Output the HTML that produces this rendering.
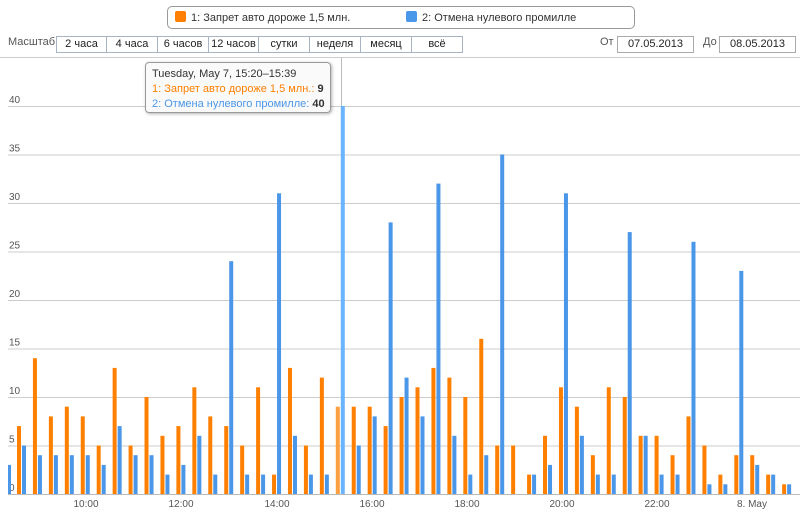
<!DOCTYPE html>
<html><head><meta charset="utf-8"><style>
body{margin:0;width:800px;height:513px;background:#fff;font-family:"Liberation Sans","DejaVu Sans",sans-serif;position:relative;overflow:hidden;color:#333}
.legend{position:absolute;left:167px;top:6px;width:466px;height:21px;border:1px solid #999;border-radius:5px;font-size:11px}
.legend span{position:absolute;top:4px}
.sw{display:inline-block;width:11px;height:11px;border-radius:2px;vertical-align:-1px;margin-right:5px}
.tb{position:absolute;top:36px;font-size:11px}
.btn{position:absolute;top:36px;height:15px;border:1px solid #a9b4c2;background:#fff;font-size:11px;text-align:center;line-height:15px;color:#222}
.inp{position:absolute;top:36px;height:15px;border:1px solid #aaa;font-size:11px;line-height:15px;text-align:center;color:#222}
.tip{position:absolute;left:145px;top:62px;width:186px;height:51px;border:1px solid #999;border-radius:4px;background:rgba(250,250,250,.92);box-shadow:1px 1px 3px rgba(0,0,0,.3);font-size:11px;line-height:15px;padding:4px 0 0 6px;box-sizing:border-box}
</style></head><body>
<div class="legend"><span style="left:7px"><i class="sw" style="background:#ff7f00"></i>1: Запрет авто дороже 1,5 млн.</span><span style="left:238px"><i class="sw" style="background:#4a96e8"></i>2: Отмена нулевого промилле</span></div>
<div class="tb" style="left:8px;color:#555">Масштаб</div>
<div class="btn" style="left:56px;width:49px">2 часа</div>
<div class="btn" style="left:106px;width:50px">4 часа</div>
<div class="btn" style="left:157px;width:50px">6 часов</div>
<div class="btn" style="left:208px;width:49px">12 часов</div>
<div class="btn" style="left:258px;width:50px">сутки</div>
<div class="btn" style="left:309px;width:50px">неделя</div>
<div class="btn" style="left:360px;width:50px">месяц</div>
<div class="btn" style="left:411px;width:50px">всё</div>
<div class="tb" style="left:600px;color:#555">От</div>
<div class="inp" style="left:617px;width:75px">07.05.2013</div>
<div class="tb" style="left:703px;color:#555">До</div>
<div class="inp" style="left:719px;width:75px">08.05.2013</div>
<svg id="c" width="800" height="513" style="position:absolute;left:0;top:0" font-family="Liberation Sans, DejaVu Sans, sans-serif" font-size="10" fill="#555"></svg>
<div class="tip">Tuesday, May 7, 15:20–15:39<br><span style="color:#ff7f00">1: Запрет авто дороже 1,5 млн.:</span> <b>9</b><br><span style="color:#4a96e8">2: Отмена нулевого промилле:</span> <b>40</b></div>
<script>
var o=[7,14,8,9,8,5,13,5,10,6,7,11,8,7,5,11,2,13,5,12,9,9,9,7,10,11,13,12,10,16,5,5,2,6,11,9,4,11,10,6,6,4,8,5,2,4,4,2,1];
var b=[5,4,4,4,4,3,7,4,4,2,3,6,2,24,2,2,31,6,2,2,40,5,8,28,12,8,32,6,2,4,35,0,2,3,31,6,2,2,27,6,2,2,26,1,1,23,3,2,1];
var s='<line x1="0" y1="57.5" x2="800" y2="57.5" stroke="#ccc"/>';
for(var k=0;k<=8;k++){var y=494-k*48.5;s+='<line x1="8" y1="'+(y+.5)+'" x2="800" y2="'+(y+.5)+'" stroke="'+(k?'#ccc':'#bbb')+'"/>';s+='<text x="9" y="'+(y-3)+'">'+(k*5)+'</text>';}
s+='<line x1="341.5" y1="58" x2="341.5" y2="494" stroke="#bbb"/>';
s+='<rect x="8" y="'+(494-3*9.7)+'" width="3" height="'+(3*9.7)+'" fill="#4a96e8"/>';
for(var i=0;i<o.length;i++){var x=17+i*15.94;var hl=(i==20);
s+='<rect x="'+x+'" y="'+(494-o[i]*9.7)+'" width="4" height="'+(o[i]*9.7)+'" fill="'+(hl?'#ffa040':'#ff7f00')+'"/>';
if(b[i])s+='<rect x="'+(x+5)+'" y="'+(494-b[i]*9.7)+'" width="4" height="'+(b[i]*9.7)+'" fill="'+(hl?'#6ab4ff':'#4a96e8')+'"/>';}
var L=[[86,'10:00'],[181,'12:00'],[277,'14:00'],[372,'16:00'],[467,'18:00'],[562,'20:00'],[657,'22:00'],[752,'8. May']];
L.forEach(function(l){s+='<text x="'+l[0]+'" y="507" text-anchor="middle">'+l[1]+'</text>';});
document.getElementById('c').innerHTML=s;
</script>
</body></html>
